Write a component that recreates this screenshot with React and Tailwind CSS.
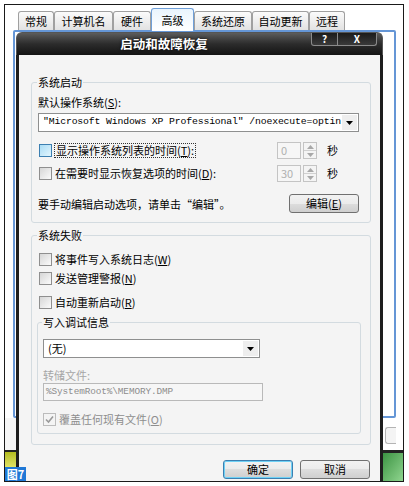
import React from "react";

const btnFace =
  "bg-[linear-gradient(#f2f2f2_0%,#ebebeb_50%,#dddddd_50%,#cfcfcf_100%)]";

function Check({ hover, checked, disabled }) {
  const box = hover
    ? "border-[#3c7fb1] bg-linear-to-br from-[#a9dcf5] to-[#e2f5fd]"
    : disabled
    ? "border-[#bcbcbc] bg-[#f4f4f4]"
    : "border-[#8f8f8f] bg-linear-to-br from-[#d6d6d6] to-[#fbfbfb]";
  return (
    <span className={`flex h-[13px] w-[13px] shrink-0 items-center justify-center border ${box}`}>
      {checked && (
        <svg width="9" height="9" viewBox="0 0 9 9">
          <path d="M1 4.5 L3.5 7 L8 1.5" fill="none" stroke="#9a9a9a" strokeWidth="1.6" />
        </svg>
      )}
    </span>
  );
}

function Arrow({ up, color = "#000" }) {
  return (
    <svg width="7" height="4" viewBox="0 0 7 4">
      <path d={up ? "M0 4 L3.5 0 L7 4 Z" : "M0 0 L7 0 L3.5 4 Z"} fill={color} />
    </svg>
  );
}

function Spin({ value }) {
  return (
    <div className="flex items-center">
      <div className="flex h-[17px] w-[24px] items-center border border-[#c4c4c4] bg-[#f6f6f6] pl-[3px] leading-none text-[#b0b0b0]">
        {value}
      </div>
      <div className="ml-[2px] flex h-[17px] w-[14px] flex-col border border-[#c4c4c4] bg-[#f4f4f4]">
        <div className="flex flex-1 items-center justify-center border-b border-[#d0d0d0]">
          <Arrow up color="#a8a8a8" />
        </div>
        <div className="flex flex-1 items-center justify-center">
          <Arrow color="#a8a8a8" />
        </div>
      </div>
    </div>
  );
}

function Combo({ children, className = "", mono }) {
  return (
    <div className={`flex h-[19px] items-center border border-[#8e8f8f] bg-white ${className}`}>
      <div
        className={`flex-1 overflow-hidden whitespace-nowrap pl-[4px] ${
          mono ? "font-['Liberation_Mono',monospace] text-[9.8px] tracking-[-0.15px]" : ""
        }`}
      >
        {children}
      </div>
      <div className="mr-[1px] flex h-[15px] w-[15px] items-center justify-center bg-[#eeeeee]">
        <Arrow />
      </div>
    </div>
  );
}

function Btn({ children, focus }) {
  return (
    <div
      className={`flex h-[19px] w-[70px] items-center justify-center rounded-[3px] border ${
        focus ? "border-[#3c7fb1] shadow-[inset_0_0_0_1px_#6fd1f5]" : "border-[#707070]"
      } ${btnFace} leading-none`}
    >
      {children}
    </div>
  );
}

function Mn({ children }) {
  return <span className="underline">{children}</span>;
}

const tabs = [
  { t: "常规", w: "w-[36px]" },
  { t: "计算机名", w: "w-[59px]" },
  { t: "硬件", w: "w-[38px]" },
  { t: "高级", w: "w-[43px]", sel: true },
  { t: "系统还原", w: "w-[58px]" },
  { t: "自动更新", w: "w-[57px]" },
  { t: "远程", w: "w-[36px]" },
];

export default function App() {
  return (
    <div className="h-[486px] w-[409px] overflow-hidden bg-white p-[4px] font-['Noto_Sans_CJK_SC',sans-serif] text-[11px] text-black">
      <div className="relative h-[478px] w-[400px] overflow-hidden border border-[#1a1a1a] bg-white">
        {/* tabs */}
        <div className="flex h-[25px] items-end pl-[13px]">
          {tabs.map((tab) => (
            <div
              key={tab.t}
              className={`flex items-center justify-center rounded-t-[3px] border border-b-0 leading-none ${tab.w} ${
                tab.sel
                  ? "relative z-10 -mb-[1px] h-[23px] border-[#6f9fd8] bg-linear-to-b from-[#e9f4fd] to-white"
                  : "h-[19px] border-[#a0a0a0] bg-linear-to-b from-[#fbfbfb] to-[#e2e2e2]"
              }`}
            >
              {tab.t}
            </div>
          ))}
        </div>

        {/* property sheet behind */}
        <div className="ml-[8px] h-[388px] w-[383px] rounded-[2px] border-2 border-[#6596d6] bg-white" />

        {/* lower strip of the sheet and desktop */}
        <div className="flex h-[63px] justify-between">
          <div className="flex w-[11px] flex-col">
            <div className="h-[32px] bg-[#f6f6f6]" />
            <div className="h-[2px] bg-[#222]" />
            <div className="h-[16px] bg-linear-to-b from-[#b4bc1c] to-[#e4e666]" />
          </div>
          <div className="flex w-[20px] flex-col">
            <div className="h-[9px]" />
            <div className="ml-[2px] h-[17px] w-[11px] rounded-l-[3px] border border-r-0 border-[#b4b4b4] bg-[#f4f4f4]" />
            <div className="h-[6px]" />
            <div className="h-[3px] bg-[#222]" />
            <div className="flex-1 bg-linear-to-br from-[#3b9443] to-[#8fd58f]" />
          </div>
        </div>

        <div className="absolute bottom-0 left-0 z-30 flex h-[14px] w-[21px] items-center justify-center bg-[#1f78d6] font-bold leading-none text-white">
          图7
        </div>

        {/* dialog */}
        <div className="absolute left-[11px] top-[27px] z-20 flex h-[460px] w-[367px] flex-col">
          <div className="flex h-[23px] rounded-t-[6px] border border-b-0 border-[#555] bg-linear-to-b from-[#5c5c5c] via-[#2c2c2c] to-[#141414]">
            <div className="flex-1 text-center text-[12.5px] font-bold leading-[22px] text-white [text-shadow:0_0_3px_#000]">
              启动和故障恢复
            </div>
            <div className="mr-[5px] flex h-[13px] self-start">
              <div className="flex w-[27px] items-center justify-center rounded-bl-[3px] border border-t-0 border-[#8a8a8a] bg-linear-to-b from-[#1c1c1c] to-[#3a3a3a] text-[10px] font-bold leading-none text-white">
                ?
              </div>
              <div className="flex w-[39px] items-center justify-center rounded-br-[3px] border border-l-0 border-t-0 border-[#8a8a8a] bg-linear-to-b from-[#1c1c1c] to-[#3a3a3a] text-[10px] font-bold leading-none text-white">
                X
              </div>
            </div>
          </div>

          <div className="flex-1 border-x-[3px] border-[#1e1e1e] bg-[#f4f4f4] pt-[20px]">
            {/* 系统启动 */}
            <fieldset className="ml-[12px] w-[340px] rounded-[3px] border border-[#d3dbe0] px-[6px] pb-[9px]">
              <legend className="-ml-[1px] px-[1px] leading-[14px]">系统启动</legend>
              <div className="mt-[6px] leading-[14px]">
                默认操作系统(<Mn>S</Mn>):
              </div>
              <Combo className="mt-[4px] w-[321px]" mono>
                "Microsoft Windows XP Professional" /noexecute=optin
              </Combo>
              <div className="mt-[10px] flex h-[17px] items-center">
                <div className="flex w-[239px] items-center">
                  <span className="ml-[1px]">
                    <Check hover />
                  </span>
                  <span className="ml-[2px] border border-dotted border-[#333] px-[1px] leading-[13px]">
                    显示操作系统列表的时间(<Mn>T</Mn>):
                  </span>
                </div>
                <Spin value="0" />
                <span className="ml-[10px] leading-none">秒</span>
              </div>
              <div className="mt-[6px] flex h-[17px] items-center">
                <div className="flex w-[239px] items-center">
                  <span className="ml-[1px]">
                    <Check />
                  </span>
                  <span className="ml-[3px] leading-[13px]">
                    在需要时显示恢复选项的时间(<Mn>D</Mn>):
                  </span>
                </div>
                <Spin value="30" />
                <span className="ml-[10px] leading-none">秒</span>
              </div>
              <div className="mt-[11px] flex h-[20px] items-center justify-between pr-[5px]">
                <span className="mt-[2px] leading-[14px]">要手动编辑启动选项，请单击“编辑”。</span>
                <Btn>
                  编辑(<Mn>E</Mn>)
                </Btn>
              </div>
            </fieldset>

            {/* 系统失败 */}
            <fieldset className="ml-[12px] mt-[5px] w-[340px] rounded-[3px] border border-[#d3dbe0] px-[6px] pb-[10px]">
              <legend className="-ml-[1px] px-[1px] leading-[14px]">系统失败</legend>
              <div className="mt-[10px] flex h-[14px] items-center">
                <span className="ml-[1px]">
                  <Check />
                </span>
                <span className="ml-[3px] leading-[14px]">
                  将事件写入系统日志(<Mn>W</Mn>)
                </span>
              </div>
              <div className="mt-[5px] flex h-[14px] items-center">
                <span className="ml-[1px]">
                  <Check />
                </span>
                <span className="ml-[3px] leading-[14px]">
                  发送管理警报(<Mn>N</Mn>)
                </span>
              </div>
              <div className="mt-[10px] flex h-[14px] items-center">
                <span className="ml-[1px]">
                  <Check />
                </span>
                <span className="ml-[3px] leading-[14px]">
                  自动重新启动(<Mn>R</Mn>)
                </span>
              </div>

              <fieldset className="-ml-[1px] mt-[6px] w-[324px] rounded-[3px] border border-[#d3dbe0] px-[5px] pb-[7px]">
                <legend className="-ml-[1px] px-[1px] leading-[14px]">写入调试信息</legend>
                <Combo className="mt-[10px] w-[217px]">(无)</Combo>
                <div className="mt-[10px] leading-[14px] text-[#a6a6a6]">转储文件:</div>
                <div className="mt-[1px] flex h-[18px] w-[220px] items-center border border-[#b9b9b9] bg-[#f6f6f6] pl-[2px] font-['Liberation_Mono',monospace] text-[9.4px] tracking-[-0.1px] text-[#8c8c8c]">
                  %SystemRoot%\MEMORY.DMP
                </div>
                <div className="mt-[11px] flex h-[14px] items-center">
                  <Check checked disabled />
                  <span className="ml-[3px] leading-[14px] text-[#8e8e8e]">
                    覆盖任何现有文件(<Mn>O</Mn>)
                  </span>
                </div>
              </fieldset>
            </fieldset>

            <div className="mt-[15px] flex justify-end gap-[7px] pr-[10px]">
              <Btn focus>确定</Btn>
              <Btn>取消</Btn>
            </div>
          </div>
        </div>
      </div>
    </div>
  );
}
